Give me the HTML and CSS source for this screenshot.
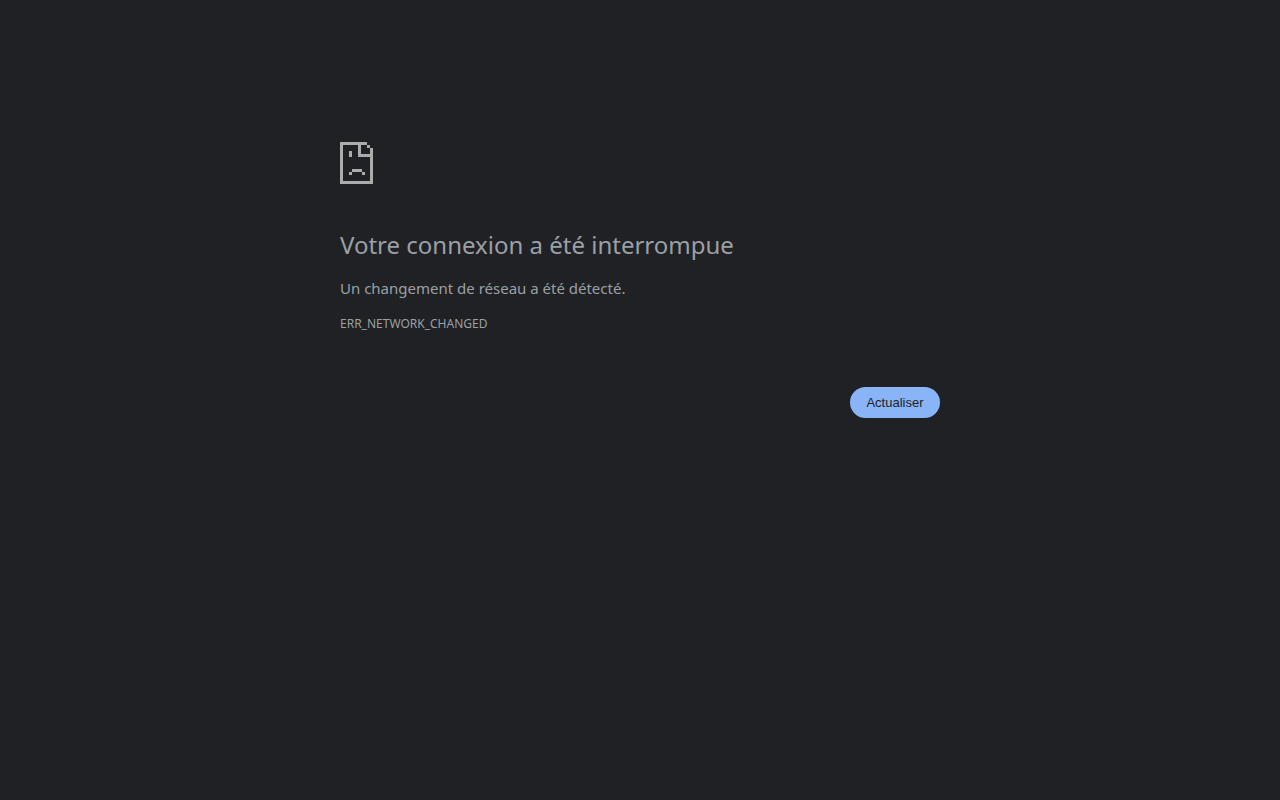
FILE: index.html
```html
<!DOCTYPE html>
<html lang="fr">
<head>
    <meta charset="utf-8">
    <meta name="viewport" content="width=device-width, initial-scale=1">
    <title>Votre connexion a été interrompue</title>
    <link rel="stylesheet" href="styles.css">
</head>
<body>
    <main class="interstitial">
        <!-- sad page -->
        <svg class="icon" viewBox="0 0 33 42" shape-rendering="crispEdges" aria-hidden="true">
            <path d="M0 0h27v3h-6v9h9V6h3v36H0zM3 3v36h27V15H18V3z" fill-rule="evenodd"/>
            <path d="M27 3h3v3h-3zM9 9h3v6H9zM12 27h10v3H12zM9 30h3v3H9zM22 30h3v3h-3z"/>
        </svg>
        <h1>Votre connexion a été interrompue</h1>
        <p>Un changement de réseau a été détecté.</p>
        <div class="error-code">ERR_NETWORK_CHANGED</div>
        <div class="buttons">
            <button class="btn" type="button">Actualiser</button>
        </div>
    </main>
</body>
</html>
```
FILE: styles.css
```css
body {
    margin: 0;
    background: #202124;
    color: #9aa0a6;
    font-family: "Noto Sans", sans-serif;
    font-size: 15px;
    line-height: 24px;
}
.interstitial {
    box-sizing: border-box;
    max-width: 600px;
    margin: 0 auto;
    padding-top: 142px;
}
.icon {
    display: block;
    width: 33px;
    height: 42px;
    margin-bottom: 45px;
    fill: #acacac;
}
h1 {
    margin: 0 0 15px;
    font-size: 24px;
    font-weight: 400;
    line-height: 32px;
}
p {
    margin: 0;
}
.error-code {
    margin-top: 12px;
    font-size: 12px;
}
.buttons {
    display: flex;
    justify-content: flex-end;
    margin-top: 51px;
}
.btn {
    min-width: 90px;
    padding: 8px 16px;
    border: 0;
    border-radius: 20px;
    background: #8ab4f8;
    color: #202124;
    font-family: "Liberation Sans", Arial, sans-serif;
    font-size: 13px;
    line-height: 15px;
    cursor: pointer;
}
```
